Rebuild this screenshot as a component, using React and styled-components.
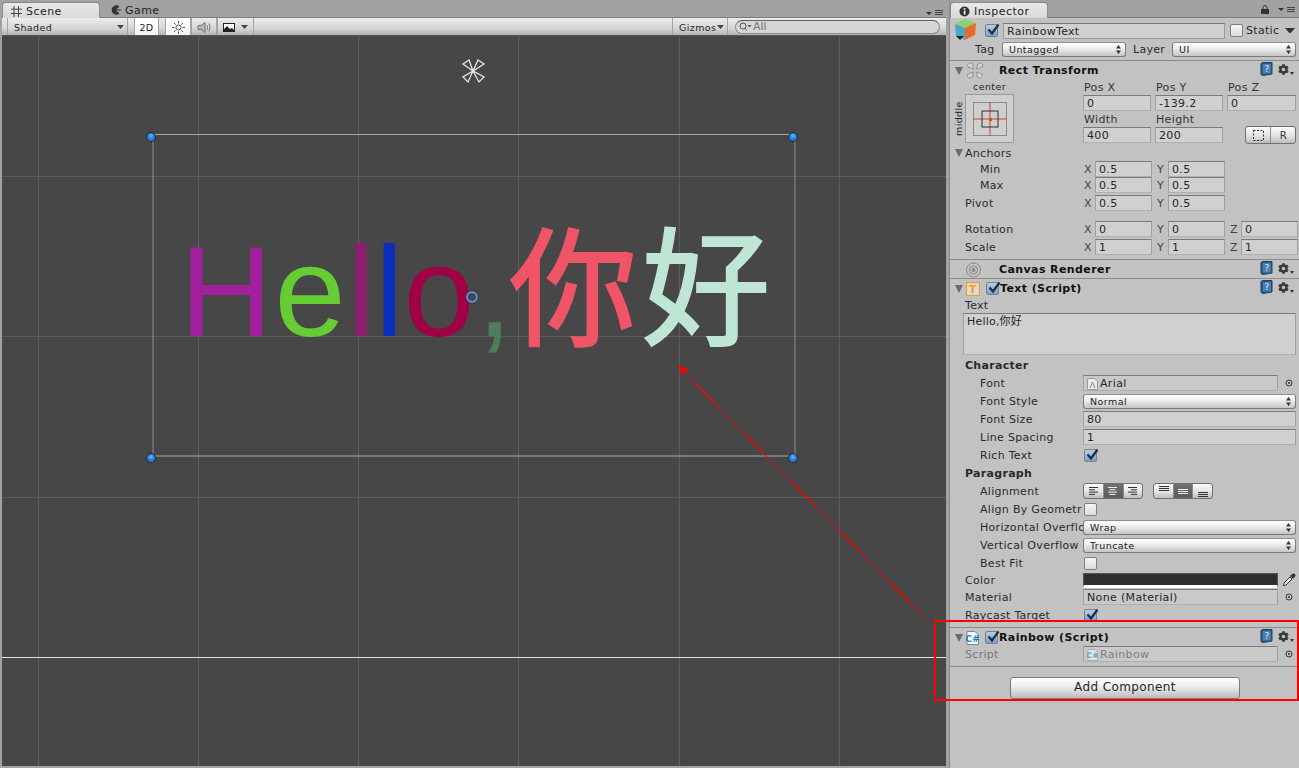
import React from "react";
import styled, { createGlobalStyle, css } from "styled-components";
import { FaCog } from "react-icons/fa";

const Global = createGlobalStyle`
  html, body { margin: 0; padding: 0; background: #a2a2a2; overflow: hidden; }
  * { box-sizing: border-box; }
  body { font-family: "DejaVu Sans", "Noto Sans CJK SC", sans-serif; font-size: 11px; color: #262626; }
`;

const Window = styled.div`
  position: relative; display: flex; width: 1299px; height: 768px; background: #a2a2a2; overflow: hidden;
`;
const SceneColumn = styled.section`
  width: 946px; flex: none; display: flex; flex-direction: column; padding-left: 2px;
`;
const TabBar = styled.div`
  position: relative; height: 18px; flex: none; display: flex; align-items: flex-end;
  border-bottom: 1px solid #7c7c7c;
`;
const Tab = styled.div`
  height: ${p => (p.$active ? 16 : 15)}px; width: ${p => p.$w}px; display: flex; align-items: center; gap: 4px;
  padding: 1px 0 0 ${p => p.$pad}px; font-size: 11px; letter-spacing: .45px; color: #1f1f1f;
  border-radius: 4px 4px 0 0; margin-bottom: ${p => (p.$active ? -1 : 0)}px;
  ${p => p.$active && css`
    background: linear-gradient(#e9e9e9, #d9d9d9);
    border: 1px solid #8a8a8a; border-bottom: none;
  `}
`;
const TabMenu = styled.div`
  position: absolute; right: ${p => p.$r}px; bottom: 1px; display: flex; align-items: center; gap: 3px;
`;
const Toolbar = styled.div`
  height: 18px; flex: none; display: flex; align-items: stretch; font-size: 9.5px; letter-spacing: .4px;
  background: linear-gradient(#ececec, #d6d6d6 60%, #b4b4b4);
  border-bottom: 1px solid #555;
`;
const ToolCell = styled.div`
  width: ${p => p.$w}px; flex: none; display: flex; align-items: center; justify-content: ${p => p.$center ? "center" : "space-between"};
  padding: ${p => p.$center ? "1px 0 0" : "1px 3px 0 6px"}; margin-left: ${p => p.$gap || 0}px;
  border-left: 1px solid #a4a4a4; border-right: 1px solid #a4a4a4;
  background: ${p => p.$on ? "linear-gradient(#fff, #f4f4f4)" : "transparent"};
`;
const ToolSpacer = styled.div`flex: 1;`;
const SearchBox = styled.div`
  width: 205px; height: 14px; align-self: center; margin: 0 6px 0 7px; border-radius: 7px;
  background: #d6d6d6; border: 1px solid #8a8a8a; border-top-color: #5f5f5f;
  display: flex; align-items: center; padding-left: 3px; gap: 1px; font-size: 11px; color: #777; letter-spacing: 0;
`;
const Canvas = styled.div`
  position: relative; width: 944px; height: 730px; background: #474747; overflow: hidden;
`;
const CanvasLayer = styled.svg`
  position: absolute; left: 0; top: 0; width: 944px; height: 730px;
`;
const RainbowText = styled.div`
  position: absolute; left: 178px; top: 181px; white-space: nowrap;
  font: 128px/150px "Liberation Sans", "Noto Sans CJK SC", sans-serif;
`;
const Glyph = styled.span`
  color: ${p => p.$c}; margin-left: ${p => p.$dx || 0}px;
  ${p => p.$heavy && css`-webkit-text-stroke: 2px ${p.$c};`}
`;

const Splitter = styled.div`
  width: 4px; flex: none; background: #a2a2a2; border-right: 1px solid #8a8a8a;
`;
const Inspector = styled.aside`
  width: 349px; flex: none; display: flex; flex-direction: column;
`;
const InspectorBody = styled.div`flex: 1; background: #c2c2c2;`;
const HeaderBlock = styled.div`
  height: 43px; position: relative; border-bottom: 1px solid #8c8c8c; padding-left: 3px;
  display: grid; grid-template-columns: 28px 1fr; 
`;
const HeaderRows = styled.div`display: flex; flex-direction: column; padding-top: 3px;`;
const HeadRow = styled.div`
  display: flex; align-items: center; height: ${p => p.$h}px; margin-left: ${p => p.$ml || 0}px;
`;
const NameField = styled.div`
  width: 222px; height: 16px; margin-left: 5px; padding: 1px 0 0 3px; line-height: 14px; letter-spacing: .3px;
  background: #d0d0d0; border: 1px solid #9a9a9a; border-top-color: #777;
`;
const Row = styled.div`
  display: flex; align-items: center; height: ${p => p.$h || 18}px; padding-right: 3px;
  margin-top: ${p => p.$mt || 0}px; position: relative;
`;
const Label = styled.div`
  width: 133px; flex: none; padding-left: ${p => p.$indent ?? 15}px; white-space: nowrap; letter-spacing: .3px;
  color: ${p => p.$dim ? "#777" : "#2a2a2a"}; font-weight: ${p => p.$bold ? 700 : 400};
`;
const FoldLabel = styled(Label)`
  padding-left: 5px; display: flex; align-items: center; gap: 2px;
`;
const CompHeader = styled.div`
  display: flex; align-items: center; height: ${p => p.$h || 18}px; padding: 1px 0 0 5px; position: relative;
  font-weight: 700; font-size: 11px; letter-spacing: .4px; color: #111;
  border-top: ${p => p.$rule ? "1px solid #8c8c8c" : "none"};
  margin-top: ${p => p.$mt || 0}px;
`;
const Fold = styled.span`
  width: 0; height: 0; flex: none; border-left: 4px solid transparent; border-right: 4px solid transparent;
  border-top: 8px solid #6b6b6b;
`;
const HeaderGap = styled.span`width: ${p => p.$w}px; flex: none;`;
const CompIcons = styled.div`
  position: absolute; right: 5px; top: 1px; display: flex; align-items: center; gap: 5px;
`;
const GearWrap = styled.span`display: inline-flex; align-items: flex-end; gap: 1px;`;
const CompTitle = styled.span`margin-left: ${p => p.$ml}px;`;
const Field = styled.div`
  width: ${p => p.$w ? p.$w + "px" : "auto"}; flex: ${p => p.$w ? "none" : 1}; height: 16px; padding: 1px 0 0 3px; line-height: 14px;
  letter-spacing: .35px; white-space: nowrap; display: flex; align-items: center; gap: 2px;
  background: ${p => p.$object ? "#c9c9c9" : "#d0d0d0"}; color: ${p => p.$dim ? "#7f7f7f" : "#262626"};
  border: 1px solid #a0a0a0; border-top-color: #7a7a7a; border-bottom-color: #b0b0b0;
`;
const TextArea = styled(Field)`
  flex: none; width: 333px; height: 42px; margin-left: 13px; align-items: flex-start; padding-top: 1px;
  font-size: 11px; letter-spacing: .2px; line-height: 14px;
`;
const Axis = styled.span`
  width: 12px; flex: none; padding-left: 1px; color: #444; font-size: 11px;
`;
const AxisField = styled(Field)`margin-right: 4px;`;
const RectBlock = styled.div`display: flex; height: 65px;`;
const AnchorCol = styled.div`
  width: 133px; flex: none; position: relative; padding: 0 0 0 15px;
`;
const AnchorCaption = styled.div`
  width: 49px; height: 15px; line-height: 16px; text-align: center; font-size: 9.5px; letter-spacing: .4px;
`;
const AnchorSide = styled.div`
  position: absolute; left: 1px; top: 15px; width: 14px; height: 49px; display: flex; align-items: center; justify-content: center;
  font-size: 9.5px; letter-spacing: .4px; writing-mode: vertical-rl; transform: rotate(180deg);
`;
const AnchorBox = styled.div`
  width: 49px; height: 49px; background: #cfcfcf; border: 1px solid #9b9b9b;
  display: flex; align-items: center; justify-content: center;
`;
const PosGrid = styled.div`
  display: grid; grid-template-columns: 68px 68px 69px; column-gap: 4px; grid-auto-rows: 16px; align-content: start;
`;
const PosLabel = styled.div`padding: 1px 0 0 1px; letter-spacing: .35px; line-height: 16px; color: #333;`;
const Seg = styled.div`
  justify-self: end; margin-top: -1px; display: flex; width: 51px; height: 18px;
  border: 1px solid #707070; border-radius: 3px; overflow: hidden;
  background: linear-gradient(#fbfbfb, #e2e2e2 55%, #bdbdbd);
`;
const SegCell = styled.div`
  width: ${p => p.$w}px; display: flex; align-items: center; justify-content: center; color: #333;
  border-left: ${p => p.$first ? "none" : "1px solid #8c8c8c"};
  background: ${p => p.$on ? "linear-gradient(#6f6f6f, #5a5a5a)" : "transparent"};
  font-size: 10px;
`;
const AlignGroup = styled.div`
  display: flex; height: 16px; margin-right: 10px; border: 1px solid #707070; border-radius: 3px; overflow: hidden;
  background: linear-gradient(#fbfbfb, #e2e2e2 55%, #bdbdbd);
`;
const Select = styled.div`
  flex: ${p => p.$w ? "none" : 1}; width: ${p => p.$w ? p.$w + "px" : "auto"}; height: ${p => p.$h || 15}px;
  display: flex; align-items: center; justify-content: space-between; padding: 0 4px 0 6px;
  font-size: 9.5px; letter-spacing: .45px; color: #222;
  border: 1px solid #7a7a7a; border-top-color: #8e8e8e; border-radius: 3px;
  background: linear-gradient(#ffffff, #ebebeb 45%, #c4c4c4);
`;
const SelectTag = styled.span`
  margin: 0 6px 0 ${p => p.$ml}px; letter-spacing: .3px; color: #2a2a2a; width: ${p => p.$w}px;
`;
const Box = styled.div`
  width: 13px; height: 13px; flex: none; border-radius: 2px; margin-left: ${p => p.$ml ?? 1}px; position: relative;
  border: 1px solid #7f7f7f;
  background: ${p => p.$on ? "linear-gradient(#b9cde8, #7b9dce)" : "linear-gradient(#f5f5f5, #dcdcdc)"};
`;
const Check = styled.svg`position: absolute; left: 0; top: -2px; width: 14px; height: 14px;`;
const ColorBar = styled.div`
  width: 195px; height: 15px; flex: none; background: #2f2f2f; border: 1px solid #555; border-bottom: 3px solid #fff;
`;
const Side = styled.div`
  flex: 1; display: flex; justify-content: flex-end; padding-right: ${p => p.$pr ?? 3}px; align-items: center;
`;
const RuleSpacer = styled.div`height: 5px; border-bottom: 1px solid #8c8c8c;`;
const FooterRow = styled.div`display: flex; justify-content: center; padding: 10px 0 0 1px;`;
const AddButton = styled.div`
  width: 230px; height: 22px; border: 1px solid #7a7a7a; border-radius: 3px; text-align: center; line-height: 19px;
  font-size: 12px; letter-spacing: .4px; color: #262626;
  background: linear-gradient(#ffffff, #f0f0f0 40%, #bcbcbc);
`;
const Callout = styled.div`
  position: absolute; left: 934px; top: 620px; width: 365px; height: 81px; border: 2px solid #f00; pointer-events: none;
`;

const Tick = () => (
  <Check viewBox="0 0 14 14"><path d="M2.5 6.5 L6 10.5 L12.5 1.5" fill="none" stroke="#1c2c48" strokeWidth="2.2" /></Check>
);
const CheckBox = ({ on, ml }) => <Box $on={on} $ml={ml}>{on && <Tick />}</Box>;

const Caret = ({ c = "#444", w = 7 }) => (
  <svg width={w} height={w * 4 / 7} viewBox="0 0 7 4"><path d="M0 0H7L3.5 4Z" fill={c} /></svg>
);
const Updown = () => (
  <svg width="5" height="9" viewBox="0 0 5 9"><path d="M2.5 0L5 3.5H0ZM2.5 9L0 5.5H5Z" fill="#333" /></svg>
);
const MenuGlyph = () => (
  <>
    <svg width="6" height="3" viewBox="0 0 6 3"><path d="M0 0H6L3 3Z" fill="#333" /></svg>
    <svg width="8" height="6" viewBox="0 0 8 6"><path d="M0 .5H8M0 2.5H8M0 4.5H8" stroke="#444" /></svg>
  </>
);
const Help = () => (
  <svg width="13" height="14" viewBox="0 0 13 14">
    <path d="M1 1.5 L3 .5 H12 V12 L3 13.5 L1 12.5Z" fill="#2b5d8c" stroke="#1d3f63" />
    <rect x="3" y="2" width="8" height="9.5" fill="#4a7eb0" />
    <text x="7" y="10" fontSize="9" fontWeight="400" textAnchor="middle" fill="#dfe8f0" fontFamily="DejaVu Sans">?</text>
  </svg>
);
const Gear = () => (
  <GearWrap>
    <FaCog size={11} color="#3a3a3a" />
    <svg width="4" height="3" viewBox="0 0 4 3"><path d="M0 0H4L2 3Z" fill="#333" /></svg>
  </GearWrap>
);
const Icons = () => <CompIcons><Help /><Gear /></CompIcons>;
const Target = () => (
  <svg width="8" height="8" viewBox="0 0 8 8"><circle cx="4" cy="4" r="3" fill="none" stroke="#333" /><circle cx="4" cy="4" r="1" fill="#333" /></svg>
);

const Cube = () => (
  <svg width="24" height="26" viewBox="0 0 24 26">
    <path d="M2 6 L12 1 L23 5 L12 10Z" fill="#8fcf6c" />
    <path d="M2 6 L12 10 L12 22 L3 18Z" fill="#46a9c6" />
    <path d="M12 10 L23 5 L22 17 L12 22Z" fill="#e66a28" />
    <path d="M3 18 H11 L7 22Z" fill="#222" />
  </svg>
);
const Petals = () => (
  <svg width="18" height="17" viewBox="0 0 18 17" fill="#d4d4d4" stroke="#8d8d8d" strokeWidth=".9">
    <path d="M7.5 7 L2 5 Q.8 1.5 4 1 L6.5 1.5Z" />
    <path d="M10.5 7 L11.5 2 L15 .8 Q17.5 2 16.5 4.5Z" />
    <path d="M7.5 10 L6.5 15 L3 16.2 Q.5 15 1.5 12.5Z" />
    <path d="M10.5 10 L16 12 Q17.2 15.5 14 16 L11.5 15.5Z" />
  </svg>
);
const Rings = () => (
  <svg width="17" height="16" viewBox="0 0 17 16" fill="none">
    <circle cx="8.5" cy="8" r="7" stroke="#8a8a8a" /><circle cx="8.5" cy="8" r="4" stroke="#8a8a8a" /><circle cx="8.5" cy="8" r="2" fill="#8a8a8a" />
  </svg>
);
const TIcon = () => (
  <svg width="14" height="14" viewBox="0 0 14 14">
    <rect x=".5" y=".5" width="13" height="13" fill="#dcdcdc" stroke="#f39b1e" strokeWidth="1.2" />
    <text x="7" y="11" fontSize="11" fontWeight="700" textAnchor="middle" fill="#f39b1e" fontFamily="DejaVu Sans">T</text>
  </svg>
);
const CsIcon = ({ dim }) => (
  <svg width={dim ? 11 : 13} height={dim ? 12 : 14} viewBox="0 0 13 14" opacity={dim ? .55 : 1}>
    <path d="M1 .5 H9 L12.5 4 V13.5 H1Z" fill="#f4f7fa" stroke="#7b8b99" />
    <text x="6.6" y="11" fontSize="9" fontWeight="700" textAnchor="middle" fill="#1d7fb5" fontFamily="DejaVu Sans">C#</text>
  </svg>
);
const FontIcon = () => (
  <svg width="11" height="12" viewBox="0 0 11 12">
    <path d="M.5 .5 H7.5 L10.5 3.5 V11.5 H.5Z" fill="#eaeaea" stroke="#9a9a9a" />
    <path d="M3 10 L5.5 4 L8 10" fill="none" stroke="#7d8fa3" />
  </svg>
);
const Dropper = () => (
  <svg width="14" height="14" viewBox="0 0 14 14">
    <path d="M1.5 12.5 L2 10 L8 4 L10 6 L4 12Z" fill="#eee" stroke="#333" />
    <path d="M8 3 L10.5 .8 Q12 0 13 1 Q14 2 13 3.5 L11 6Z" fill="#333" />
  </svg>
);
const AlignIcon = ({ mode, on }) => {
  const c = on ? "#eee" : "#333";
  const rows = mode === "l" ? [[0, 9], [0, 6], [0, 9], [0, 6]] : mode === "c" ? [[0, 9], [1.5, 6], [0, 9], [1.5, 6]] : [[0, 9], [3, 6], [0, 9], [3, 6]];
  return (
    <svg width="10" height="9" viewBox="0 0 10 9">
      {rows.map(([x, w], i) => <rect key={i} x={x} y={i * 2.3} width={w} height="1" fill={c} />)}
    </svg>
  );
};
const VAlignIcon = ({ y, on }) => (
  <svg width="10" height="12" viewBox="0 0 10 12">
    {[0, 2, 4].map(i => <rect key={i} x="0" y={y + i} width="10" height="1" fill={on ? "#eee" : "#333"} />)}
  </svg>
);

const XYZ = ({ values }) => (
  <>
    {values.map(([a, v]) => (
      <React.Fragment key={a}>
        <Axis>{a}</Axis>
        <AxisField $w={57}>{v}</AxisField>
      </React.Fragment>
    ))}
  </>
);

const Hash = () => (
  <svg width="11" height="11" viewBox="0 0 11 11"><path d="M3 0V11M7.5 0V11M0 3.2H11M0 7.5H11" stroke="#444" /></svg>
);
const Pac = () => (
  <svg width="10" height="10" viewBox="0 0 10 10"><path d="M8.5 1.5A4.7 4.7 0 1 0 8.5 8.5L5 5.6H10V4.4H5Z" fill="#333" /></svg>
);
const Sun = () => (
  <svg width="13" height="13" viewBox="0 0 13 13" stroke="#555" fill="none">
    <circle cx="6.5" cy="6.5" r="2.5" />
    <path d="M6.5 0V2.5M6.5 10.5V13M0 6.5H2.5M10.5 6.5H13M2 2L3.6 3.6M9.4 9.4L11 11M2 11L3.6 9.4M9.4 3.6L11 2" />
  </svg>
);
const Speaker = () => (
  <svg width="15" height="13" viewBox="0 0 15 13" fill="none">
    <path d="M1 4.5H4L8 1.5V11.5L4 8.5H1Z" fill="#b8b8b8" stroke="#777" />
    <path d="M10 4Q11.2 6.5 10 9M12 2.5Q14 6.5 12 10.5" stroke="#777" />
  </svg>
);
const ImgIcon = () => (
  <svg width="12" height="9" viewBox="0 0 12 9"><rect x=".5" y=".5" width="11" height="8" fill="#fff" stroke="#222" /><path d="M1 8V6L4 3L7 6L9 5L11 7V8Z" fill="#222" /></svg>
);
const Lens = () => (
  <svg width="13" height="9" viewBox="0 0 13 9" fill="none"><circle cx="4" cy="4" r="3" stroke="#555" /><path d="M6 6L8 8.5" stroke="#555" /><path d="M8.5 3H12.5L10.5 5.5Z" fill="#555" /></svg>
);
const Lock = () => (
  <svg width="8" height="9" viewBox="0 0 8 9"><path d="M2 4V2.5A2 2 0 0 1 6 2.5V4" fill="none" stroke="#333" /><rect x="0" y="4" width="8" height="5" fill="#333" /></svg>
);
const InfoDot = () => (
  <svg width="11" height="11" viewBox="0 0 11 11"><circle cx="5.5" cy="5.5" r="5" fill="#333" /><rect x="4.7" y="4.6" width="1.8" height="4" fill="#eee" /><rect x="4.7" y="2.2" width="1.8" height="1.6" fill="#eee" /></svg>
);

const vGrid = [38, 198, 358, 518, 679, 839];
const hGrid = [176, 336, 497];

const Handle = ({ x, y }) => (
  <g>
    <circle cx={x} cy={y} r="4.5" fill="#2a7de0" stroke="#1a2a3a" strokeWidth="1" />
    <circle cx={x} cy={y - 1} r="2" fill="#5aa5f0" />
  </g>
);

const SceneGrid = () => (
  <CanvasLayer viewBox="2 36 944 730">
    {vGrid.map(x => <line key={x} x1={x + .5} x2={x + .5} y1="36" y2="766" stroke="#5d5d5d" strokeWidth="1.2" />)}
    {hGrid.map(y => <line key={y} y1={y + .5} y2={y + .5} x1="2" x2="946" stroke="#5c5c5c" strokeWidth="1" />)}
    <line y1="657.5" y2="657.5" x1="2" x2="946" stroke="#e2e2e2" strokeWidth="1" />
  </CanvasLayer>
);

const SceneGizmos = () => (
  <CanvasLayer viewBox="2 36 944 730">
    <g stroke="#8e8e8e" fill="none">
      <line x1="153" x2="795" y1="134.5" y2="134.5" stroke="#a6a6a6" />
      <line x1="153" x2="795" y1="456" y2="456" stroke="#a6a6a6" />
      <line x1="153" x2="153" y1="135" y2="456" />
      <line x1="795" x2="795" y1="135" y2="456" />
    </g>
    <Handle x={151} y={137} /><Handle x={793} y={137} /><Handle x={151} y={458} /><Handle x={793} y={458} />
    <circle cx="472" cy="297" r="5" fill="rgba(40,70,110,.25)" stroke="#5f9ee6" strokeWidth="2" />
    <circle cx="472" cy="297" r="6.2" fill="none" stroke="#234" strokeWidth=".6" />
    <g fill="none" stroke="#e6e6e6" strokeWidth="1.3">
      <path d="M473 71 L463 64 L469 60Z" /><path d="M473 71 L478 60 L484 64Z" />
      <path d="M473 71 L463 77 L468 82Z" /><path d="M473 71 L484 77 L479 82Z" />
    </g>
    <line x1="924" y1="617" x2="682" y2="370" stroke="#f00" strokeWidth="1" shapeRendering="crispEdges" />
    <path d="M678 365 L688 369 L682 375Z" fill="#f00" />
  </CanvasLayer>
);

export default function App() {
  return (
    <Window>
      <Global />
      <SceneColumn>
        <TabBar>
          <Tab $active $w={98} $pad={8}><Hash />Scene</Tab>
          <Tab $w={70} $pad={11}><Pac />Game</Tab>
          <TabMenu $r={3}><MenuGlyph /></TabMenu>
        </TabBar>
        <Toolbar>
          <ToolCell $w={121} $gap={5}>Shaded<Caret /></ToolCell>
          <ToolCell $w={25} $gap={6} $center $on>2D</ToolCell>
          <ToolCell $w={26} $gap={6} $center $on><Sun /></ToolCell>
          <ToolCell $w={26} $center><Speaker /></ToolCell>
          <ToolCell $w={37} $center><ImgIcon />&nbsp;&nbsp;<Caret /></ToolCell>
          <ToolSpacer />
          <ToolCell $w={56}>Gizmos<Caret /></ToolCell>
          <SearchBox><Lens />All</SearchBox>
        </Toolbar>
        <Canvas>
          <SceneGrid />
          <RainbowText>
            <Glyph $c="#a2209e">H</Glyph>
            <Glyph $c="#66cc33" $dx={2}>e</Glyph>
            <Glyph $c="#8e1f6c" $dx={1}>l</Glyph>
            <Glyph $c="#0a2fbd">l</Glyph>
            <Glyph $c="#9f0046">o</Glyph>
            <Glyph $c="#4e7d5a" $dx={2}>,</Glyph>
            <Glyph $c="#ef5567" $dx={-3} $heavy>你</Glyph>
            <Glyph $c="#bfe6d4" $dx={5} $heavy>好</Glyph>
          </RainbowText>
          <SceneGizmos />
        </Canvas>
      </SceneColumn>
      <Splitter />
      <Inspector>
        <TabBar>
          <Tab $active $w={98} $pad={8}><InfoDot />Inspector</Tab>
          <TabMenu $r={4}><Lock />&nbsp;<MenuGlyph /></TabMenu>
        </TabBar>
        <InspectorBody>
          <HeaderBlock>
            <Cube />
            <HeaderRows>
              <HeadRow $h={19} $ml={3}>
                <CheckBox on />
                <NameField>RainbowText</NameField>
                <Box $ml={5} />
                <SelectTag $ml={3} $w={33}>Static</SelectTag>
                <Caret c="#333" w={10} />
              </HeadRow>
              <HeadRow $h={19} $ml={-6}>
                <SelectTag $ml={0} $w={21}>Tag</SelectTag>
                <Select $w={124}>Untagged<Updown /></Select>
                <SelectTag $ml={7} $w={33}>Layer</SelectTag>
                <Select $w={124}>UI<Updown /></Select>
              </HeadRow>
            </HeaderRows>
          </HeaderBlock>

          <CompHeader>
            <Fold /><HeaderGap $w={3} /><Petals />
            <CompTitle $ml={15}>Rect Transform</CompTitle>
            <Icons />
          </CompHeader>
          <RectBlock>
            <AnchorCol>
              <AnchorCaption>center</AnchorCaption>
              <AnchorSide>middle</AnchorSide>
              <AnchorBox>
                <svg width="34" height="34" viewBox="0 0 34 34" fill="none">
                  <rect x=".5" y=".5" width="33" height="33" stroke="#8a8a8a" />
                  <path d="M0 17H34M17 0V34" stroke="#d43a3a" />
                  <rect x="9" y="9" width="16" height="16" stroke="#333" />
                  <rect x="16" y="16" width="3" height="3" fill="#a86a10" />
                </svg>
              </AnchorBox>
            </AnchorCol>
            <PosGrid>
              <PosLabel>Pos X</PosLabel><PosLabel>Pos Y</PosLabel><PosLabel>Pos Z</PosLabel>
              <Field>0</Field><Field>-139.2</Field><Field>0</Field>
              <PosLabel>Width</PosLabel><PosLabel>Height</PosLabel><span />
              <Field>400</Field><Field>200</Field>
              <Seg>
                <SegCell $w={25} $first>
                  <svg width="11" height="11" viewBox="0 0 11 11"><rect x=".5" y=".5" width="10" height="10" fill="none" stroke="#333" strokeDasharray="2 1.5" /></svg>
                </SegCell>
                <SegCell $w={25}>R</SegCell>
              </Seg>
            </PosGrid>
          </RectBlock>

          <Row><FoldLabel><Fold />Anchors</FoldLabel></Row>
          <Row $h={16} $mt={-1}><Label $indent={30}>Min</Label><XYZ values={[["X", "0.5"], ["Y", "0.5"]]} /></Row>
          <Row $h={16}><Label $indent={30}>Max</Label><XYZ values={[["X", "0.5"], ["Y", "0.5"]]} /></Row>
          <Row $h={16} $mt={2}><Label>Pivot</Label><XYZ values={[["X", "0.5"], ["Y", "0.5"]]} /></Row>
          <Row $h={16} $mt={10}><Label>Rotation</Label><XYZ values={[["X", "0"], ["Y", "0"], ["Z", "0"]]} /></Row>
          <Row $h={16} $mt={2}><Label>Scale</Label><XYZ values={[["X", "1"], ["Y", "1"], ["Z", "1"]]} /></Row>

          <CompHeader $h={19} $rule $mt={4}>
            <HeaderGap $w={10} /><Rings />
            <CompTitle $ml={17}>Canvas Renderer</CompTitle>
            <Icons />
          </CompHeader>
          <CompHeader $rule $h={19}>
            <Fold /><HeaderGap $w={3} /><TIcon /><HeaderGap $w={5} /><CheckBox on />
            <CompTitle $ml={1}>Text (Script)</CompTitle>
            <Icons />
          </CompHeader>
          <Row $h={16}><Label>Text</Label></Row>
          <TextArea>Hello,你好</TextArea>
          <Row $mt={1}><Label $bold>Character</Label></Row>
          <Row><Label $indent={30}>Font</Label><Field $w={195} $object><FontIcon />Arial</Field><Side $pr={3}><Target /></Side></Row>
          <Row><Label $indent={30}>Font Style</Label><Select>Normal<Updown /></Select></Row>
          <Row><Label $indent={30}>Font Size</Label><Field>80</Field></Row>
          <Row><Label $indent={30}>Line Spacing</Label><Field>1</Field></Row>
          <Row><Label $indent={30}>Rich Text</Label><CheckBox on /></Row>
          <Row><Label $bold>Paragraph</Label></Row>
          <Row>
            <Label $indent={30}>Alignment</Label>
            <AlignGroup>
              <SegCell $w={19.3} $first><AlignIcon mode="l" /></SegCell>
              <SegCell $w={19.3} $on><AlignIcon mode="c" on /></SegCell>
              <SegCell $w={19.3}><AlignIcon mode="r" /></SegCell>
            </AlignGroup>
            <AlignGroup>
              <SegCell $w={19.3} $first><VAlignIcon y={1} /></SegCell>
              <SegCell $w={19.3} $on><VAlignIcon y={4} on /></SegCell>
              <SegCell $w={19.3}><VAlignIcon y={7} /></SegCell>
            </AlignGroup>
          </Row>
          <Row><Label $indent={30}>Align By Geometr</Label><CheckBox /></Row>
          <Row><Label $indent={30}>Horizontal Overflo</Label><Select>Wrap<Updown /></Select></Row>
          <Row><Label $indent={30}>Vertical Overflow</Label><Select>Truncate<Updown /></Select></Row>
          <Row><Label $indent={30}>Best Fit</Label><CheckBox /></Row>
          <Row $h={16}><Label>Color</Label><ColorBar /><Side $pr={0}><Dropper /></Side></Row>
          <Row $h={16} $mt={1}><Label>Material</Label><Field $w={195} $object>None (Material)</Field><Side $pr={3}><Target /></Side></Row>
          <Row $mt={1}><Label>Raycast Target</Label><CheckBox on /></Row>

          <CompHeader $rule $h={19} $mt={3}>
            <Fold /><HeaderGap $w={3} /><CsIcon /><HeaderGap $w={5} /><CheckBox on />
            <CompTitle $ml={1}>Rainbow (Script)</CompTitle>
            <Icons />
          </CompHeader>
          <Row $h={16}><Label $dim>Script</Label><Field $w={195} $object $dim><CsIcon dim />Rainbow</Field><Side $pr={3}><Target /></Side></Row>
          <RuleSpacer />
          <FooterRow><AddButton>Add Component</AddButton></FooterRow>
        </InspectorBody>
      </Inspector>
      <Callout />
    </Window>
  );
}
